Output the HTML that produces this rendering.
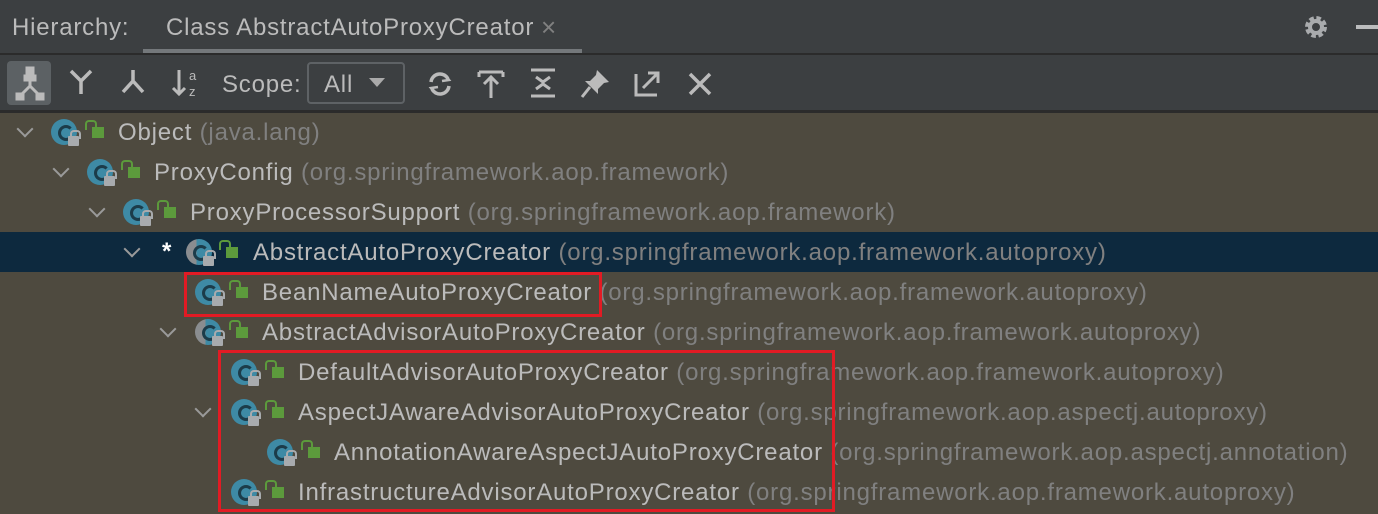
<!DOCTYPE html>
<html><head><meta charset="utf-8"><style>
*{margin:0;padding:0;box-sizing:border-box}
body{width:1378px;height:514px;overflow:hidden;background:#4e4a3f;font-family:"Liberation Sans",sans-serif;position:relative;color:#bbbbbb}
.hdr{position:absolute;left:0;top:0;width:1378px;height:53px;background:#3c3f41}
.l1{position:absolute;left:0;top:53px;width:1378px;height:2px;background:#2b2b2b}
.tb{position:absolute;left:0;top:55px;width:1378px;height:55px;background:#3c3f41}
.l2{position:absolute;left:0;top:110px;width:1378px;height:3px;background:#2b2b2b}
.t{position:absolute;font-size:24px;white-space:nowrap;line-height:28px;letter-spacing:0.8px}
.g{color:#808080}
.row{position:absolute;left:0;width:1378px;height:40px}
.sel{background:#0d293e}
.chev{position:absolute;width:12px;height:12px;border-right:2px solid #9a9a9a;border-bottom:2px solid #9a9a9a;transform:rotate(45deg)}
.ic{position:absolute;width:26px;height:26px;border-radius:50%;background:#3e8aa5}
.ic::after{content:"";position:absolute;left:7px;top:6px;width:10px;height:10px;border:3px solid #1c3c4a;border-right-color:transparent;border-radius:50%}
.ab{background:linear-gradient(90deg,#8a8d90 0 40%,#3e8aa5 40%)}
.lk{position:absolute;width:11px;height:10px;background:#a8abae;border-radius:1px}
.lk::before{content:"";position:absolute;left:2px;top:-6px;width:7px;height:7px;border:2px solid #a8abae;border-bottom:none;border-radius:4px 4px 0 0}
.ul{position:absolute;width:12px;height:11px;background:#5c9a3c}
.ul::before{content:"";position:absolute;left:-7px;top:-7px;width:8px;height:8px;border:2px solid #5c9a3c;border-bottom:none;border-radius:4px 4px 0 0}
.box{position:absolute;border:3px solid #e21b24}
svg{position:absolute}
</style></head><body>
<div class="hdr"></div><div class="l1"></div><div class="tb"></div><div class="l2"></div>
<div class="t" style="left:12px;top:14px;color:#bbb">Hierarchy:</div>
<div class="t" style="left:166px;top:14px">Class AbstractAutoProxyCreator</div>
<div class="t g" style="left:541px;top:13px;font-size:26px">×</div>
<div style="position:absolute;left:143px;top:49px;width:439px;height:4px;background:#74787b"></div>
<svg style="left:1302px;top:13px" width="28" height="28" viewBox="0 0 28 28"><circle cx="14" cy="14" r="8" fill="none" stroke="#a9abad" stroke-width="6" stroke-dasharray="4 2.3"/><circle cx="14" cy="14" r="6" fill="none" stroke="#a9abad" stroke-width="4"/></svg>
<div style="position:absolute;left:1356px;top:25px;width:22px;height:4px;background:#bbbcbd"></div>
<!-- toolbar -->
<div style="position:absolute;left:7px;top:61px;width:44px;height:44px;background:#5c6164;border-radius:4px"></div>
<svg style="left:10px;top:64px" width="40" height="40" viewBox="0 0 40 40" fill="none" stroke="#bbb" stroke-width="3"><rect x="17" y="4" width="6" height="5" fill="#bbb"/><line x1="20" y1="9" x2="20" y2="22"/><rect x="15" y="12" width="10" height="4" fill="#bbb"/><path d="M20 22 L12 30 M20 22 L28 30"/><rect x="7" y="30" width="6" height="5" fill="#bbb"/><rect x="27" y="30" width="6" height="5" fill="#bbb"/></svg>
<svg style="left:66px;top:66px" width="30" height="34" viewBox="0 0 30 34" fill="none" stroke="#bbb" stroke-width="3.5"><path d="M5 5 L15 15 L25 5 M15 15 V28"/></svg>
<svg style="left:118px;top:66px" width="30" height="34" viewBox="0 0 30 34" fill="none" stroke="#bbb" stroke-width="3.5"><path d="M15 4 V15 L5 26 M15 15 L25 26"/></svg>
<svg style="left:170px;top:66px" width="34" height="34" viewBox="0 0 34 34" fill="none" stroke="#bbb" stroke-width="3"><path d="M9 4 V28 M3 22 L9 28 L15 22"/><text x="19" y="14" font-size="13" fill="#bbb" stroke="none" font-family="Liberation Sans">a</text><text x="19" y="30" font-size="13" fill="#bbb" stroke="none" font-family="Liberation Sans">z</text></svg>
<div class="t" style="left:222px;top:71px">Scope:</div>
<div style="position:absolute;left:307px;top:62px;width:98px;height:42px;border:2px solid #5e6265;border-radius:4px"></div>
<div class="t" style="left:324px;top:71px">All</div>
<svg style="left:367px;top:76px" width="20" height="14"><path d="M2 2 H18 L10 11 Z" fill="#aaa"/></svg>
<svg style="left:425px;top:69px" width="30" height="30" viewBox="0 0 30 30" fill="none" stroke="#bbb" stroke-width="3.5"><path d="M6 13 A9 9 0 0 1 23 10 M24 17 A9 9 0 0 1 7 20"/><path d="M19 5 L24 11 L17 12 M11 25 L6 19 L13 18" stroke-width="2.5"/></svg>
<svg style="left:476px;top:68px" width="30" height="32" viewBox="0 0 30 32" fill="none" stroke="#bbb" stroke-width="3"><path d="M3 4 H27 M3 4 V9 M27 4 V9 M15 10 V30 M8 16 L15 9 L22 16"/></svg>
<svg style="left:528px;top:66px" width="30" height="34" viewBox="0 0 30 34" fill="none" stroke="#bbb" stroke-width="3"><path d="M3 4 H27 M3 30 H27 M8 11 L15 16 L22 11 M8 23 L15 18 L22 23" /></svg>
<svg style="left:580px;top:67px" width="32" height="32" viewBox="0 0 32 32"><path d="M17 3 L29 15 L24 16 L18 22 L18 27 L5 14 L10 14 L16 8 Z" fill="#bbb"/><path d="M10 20 L2 30" stroke="#bbb" stroke-width="3"/></svg>
<svg style="left:633px;top:68px" width="30" height="30" viewBox="0 0 30 30" fill="none" stroke="#bbb" stroke-width="3"><path d="M3 6 V27 H24 M10 20 L25 5 M15 5 H25 V15"/></svg>
<svg style="left:687px;top:71px" width="26" height="26" fill="none" stroke="#bbb" stroke-width="3.5"><path d="M3 3 L23 23 M23 3 L3 23"/></svg>
<!-- tree -->
<div class="row sel" style="top:232px"></div>

<div class="chev" style="left:19px;top:123px"></div>
<div class="ic" style="left:51px;top:119px"></div><div class="lk" style="left:68px;top:136px"></div><div class="ul" style="left:92px;top:127px"></div>
<div class="t" style="left:118px;top:119px">Object <span class="g">(java.lang)</span></div>

<div class="chev" style="left:55px;top:163px"></div>
<div class="ic" style="left:87px;top:159px"></div><div class="lk" style="left:104px;top:176px"></div><div class="ul" style="left:128px;top:167px"></div>
<div class="t" style="left:154px;top:159px">ProxyConfig <span class="g">(org.springframework.aop.framework)</span></div>

<div class="chev" style="left:91px;top:203px"></div>
<div class="ic" style="left:123px;top:199px"></div><div class="lk" style="left:140px;top:216px"></div><div class="ul" style="left:164px;top:207px"></div>
<div class="t" style="left:190px;top:199px">ProxyProcessorSupport <span class="g">(org.springframework.aop.framework)</span></div>

<div class="chev" style="left:126px;top:243px"></div>
<div class="t" style="left:162px;top:238px;color:#fff;font-weight:bold">*</div>
<div class="ic ab" style="left:186px;top:239px"></div><div class="lk" style="left:203px;top:256px"></div><div class="ul" style="left:226px;top:247px"></div>
<div class="t" style="left:253px;top:239px">AbstractAutoProxyCreator <span class="g">(org.springframework.aop.framework.autoproxy)</span></div>

<div class="ic" style="left:195px;top:279px"></div><div class="lk" style="left:212px;top:296px"></div><div class="ul" style="left:236px;top:287px"></div>
<div class="t" style="left:262px;top:279px">BeanNameAutoProxyCreator <span class="g">(org.springframework.aop.framework.autoproxy)</span></div>

<div class="chev" style="left:162px;top:323px"></div>
<div class="ic ab" style="left:195px;top:319px"></div><div class="lk" style="left:212px;top:336px"></div><div class="ul" style="left:236px;top:327px"></div>
<div class="t" style="left:262px;top:319px">AbstractAdvisorAutoProxyCreator <span class="g">(org.springframework.aop.framework.autoproxy)</span></div>

<div class="ic" style="left:231px;top:359px"></div><div class="lk" style="left:248px;top:376px"></div><div class="ul" style="left:272px;top:367px"></div>
<div class="t" style="left:298px;top:359px">DefaultAdvisorAutoProxyCreator <span class="g">(org.springframework.aop.framework.autoproxy)</span></div>

<div class="chev" style="left:197px;top:403px"></div>
<div class="ic" style="left:231px;top:399px"></div><div class="lk" style="left:248px;top:416px"></div><div class="ul" style="left:272px;top:407px"></div>
<div class="t" style="left:298px;top:399px">AspectJAwareAdvisorAutoProxyCreator <span class="g">(org.springframework.aop.aspectj.autoproxy)</span></div>

<div class="ic" style="left:267px;top:439px"></div><div class="lk" style="left:284px;top:456px"></div><div class="ul" style="left:308px;top:447px"></div>
<div class="t" style="left:334px;top:439px">AnnotationAwareAspectJAutoProxyCreator <span class="g">(org.springframework.aop.aspectj.annotation)</span></div>

<div class="ic" style="left:231px;top:479px"></div><div class="lk" style="left:248px;top:496px"></div><div class="ul" style="left:272px;top:487px"></div>
<div class="t" style="left:298px;top:479px">InfrastructureAdvisorAutoProxyCreator <span class="g">(org.springframework.aop.framework.autoproxy)</span></div>

<div class="box" style="left:184px;top:272px;width:418px;height:45px"></div>
<div class="box" style="left:218px;top:350px;width:617px;height:162px"></div>
</body></html>
